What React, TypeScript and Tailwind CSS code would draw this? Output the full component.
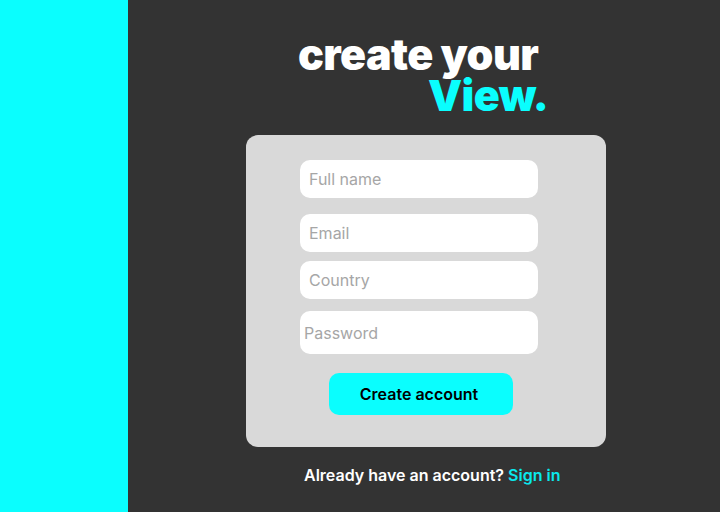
import React from "react";

export default function App() {
  const inputCls =
    "w-[238px] rounded-[10px] bg-white px-[9px] text-[16px] text-[#333] placeholder-[#a6a6a6] outline-none";
  return (
    <div
      className="flex h-[512px] w-[720px] overflow-hidden bg-[#333333]"
      style={{ fontFamily: "Inter, 'Noto Sans', sans-serif" }}
    >
      <div className="h-full w-[128px] shrink-0 bg-[#0afefe]" />
      <div className="flex flex-1 flex-col">
        <div className="mt-[34px] ml-[170px] flex flex-col">
          <div className="h-[41px] text-[43px] font-black leading-[41px] tracking-[-0.6px] text-white">
            create your
          </div>
          <div className="ml-[130px] h-[41px] text-[43px] font-black leading-[41px] tracking-[-0.6px] text-[#0afefe]">
            View.
          </div>
        </div>
        <div className="mt-[19px] ml-[118px] flex h-[312px] w-[360px] flex-col rounded-[12px] bg-[#d9d9d9] pt-[25px] pl-[54px]">
          <input className={`${inputCls} h-[38px]`} placeholder="Full name" />
          <input className={`${inputCls} mt-[16px] h-[38px]`} placeholder="Email" />
          <input className={`${inputCls} mt-[9px] h-[38px]`} placeholder="Country" />
          <input
            className={`${inputCls} mt-[12px] h-[43px] !px-[4px]`}
            placeholder="Password"
          />
          <button className="mt-[19px] ml-[29px] h-[42px] w-[184px] rounded-[10px] bg-[#0afefe] pr-[4px] text-[16px] font-semibold text-black">
            Create account
          </button>
        </div>
        <div className="mt-[16px] ml-[176px] text-[16px] font-semibold text-white">
          Already have an account? <span className="text-[#0ae8ec]">Sign in</span>
        </div>
      </div>
    </div>
  );
}
